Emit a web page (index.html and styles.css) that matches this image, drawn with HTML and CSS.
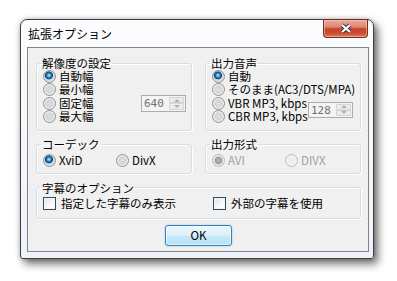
FILE: index.html
```html
<!DOCTYPE html>
<html lang="ja">
<head>
    <meta charset="UTF-8">
    <title>拡張オプション</title>
    <link rel="stylesheet" href="styles.css">
</head>
<body>
    <div class="window">
        <div class="titlebar">
            <span class="title">拡張オプション</span>
            <button class="close" type="button">
                <svg width="14" height="11" viewBox="0 0 14 11">
                    <path d="M3 2 L11 9 M11 2 L3 9" stroke="#3a3a3a" stroke-width="4.2" fill="none"/>
                    <path d="M3 2 L11 9 M11 2 L3 9" stroke="#fff" stroke-width="2.2" fill="none"/>
                </svg>
            </button>
        </div>
        <div class="client">
            <div class="groups">
                <fieldset class="group tall">
                    <legend>解像度の設定</legend>
                    <label class="opt"><input type="radio" name="res" checked> 自動幅</label>
                    <label class="opt"><input type="radio" name="res"> 最小幅</label>
                    <div class="opt">
                        <label class="opt"><input type="radio" name="res"> 固定幅</label>
                        <span class="spin fixed">
                            <span class="val">640</span>
                            <span class="arrows"><span class="up"></span><span class="down"></span></span>
                        </span>
                    </div>
                    <label class="opt"><input type="radio" name="res"> 最大幅</label>
                </fieldset>

                <fieldset class="group tall">
                    <legend>出力音声</legend>
                    <label class="opt"><input type="radio" name="audio" checked> 自動</label>
                    <label class="opt"><input type="radio" name="audio"> そのまま(AC3/DTS/MPA)</label>
                    <div class="pair">
                        <div>
                            <label class="opt"><input type="radio" name="audio"> VBR MP3, kbps</label>
                            <label class="opt"><input type="radio" name="audio"> CBR MP3, kbps</label>
                        </div>
                        <span class="spin">
                            <span class="val">128</span>
                            <span class="arrows"><span class="up"></span><span class="down"></span></span>
                        </span>
                    </div>
                </fieldset>

                <fieldset class="group short">
                    <legend>コーデック</legend>
                    <div class="inline">
                        <label class="opt"><input type="radio" name="codec" checked> XviD</label>
                        <label class="opt"><input type="radio" name="codec"> DivX</label>
                    </div>
                </fieldset>

                <fieldset class="group short" disabled>
                    <legend>出力形式</legend>
                    <div class="inline">
                        <label class="opt off"><input type="radio" name="fmt" checked disabled> AVI</label>
                        <label class="opt off"><input type="radio" name="fmt" disabled> DIVX</label>
                    </div>
                </fieldset>

                <fieldset class="group wide">
                    <legend>字幕のオプション</legend>
                    <div class="checks">
                        <label class="opt"><input type="checkbox"> 指定した字幕のみ表示</label>
                        <label class="opt"><input type="checkbox"> 外部の字幕を使用</label>
                    </div>
                </fieldset>
            </div>
            <div class="actions">
                <button class="ok" type="button">OK</button>
            </div>
        </div>
    </div>
</body>
</html>
```

FILE: styles.css
```css
html, body {
    margin: 0;
    height: 100%;
    overflow: hidden;
}
body {
    background: #fff;
    padding: 19px 0 0 20px;
    box-sizing: border-box;
    font-family: "Noto Sans CJK JP", "Liberation Sans", sans-serif;
    font-size: 11.5px;
    color: #000;
}

/* window frame */
.window {
    width: 354px;
    height: 240px;
    box-sizing: border-box;
    border: 1px solid #3e3e3e;
    border-radius: 7px 7px 3px 3px;
    background: linear-gradient(#fbfcfe, #eef3f9);
    box-shadow: 4px 5px 9px rgba(0, 0, 0, 0.55), 0 0 5px rgba(0, 0, 0, 0.25);
    display: flex;
    flex-direction: column;
}
.titlebar {
    height: 27px;
    display: flex;
    align-items: center;
    padding-left: 7px;
    flex: none;
}
.title {
    font-size: 12px;
    line-height: 14px;
    margin-top: 0;
}
.close {
    margin: -1px 5px 0 auto;
    align-self: flex-start;
    width: 45px;
    height: 19px;
    padding: 0;
    border: 1px solid #7c2d20;
    border-top-color: #6a2a20;
    border-radius: 0 0 4px 4px;
    background: linear-gradient(#e9a99a 0%, #dd8b77 40%, #c9452c 52%, #c94a2f 75%, #dc7a5c 100%);
    box-shadow: inset 0 0 0 1px rgba(255, 220, 210, 0.45);
    display: flex;
    align-items: center;
    justify-content: center;
}
.close svg {
    display: block;
}

/* client area */
.client {
    flex: 1;
    margin: 0 4px 6px 6px;
    border: 1px solid #838383;
    background: #f0f0f0;
    padding: 8px 7px 0 8px;
    display: flex;
    flex-direction: column;
}
.groups {
    display: grid;
    grid-template-columns: 156px 156px;
    column-gap: 13px;
}
.group {
    margin: 0;
    min-width: 0;
    border: 1px solid #d5dfe5;
    border-radius: 3px;
    padding: 0 5px 7px 6px;
    box-shadow: 1px 1px 0 #fff, inset 1px 1px 0 #fff;
}
.group legend {
    padding: 0 1px;
    margin-left: -2px;
    line-height: 14px;
}
.group.short {
    margin-top: 6px;
    padding-top: 3px;
    padding-bottom: 5px;
}
.group.wide {
    grid-column: 1 / 3;
    margin-top: 7px;
    padding-top: 2px;
    padding-bottom: 8px;
}

.opt {
    display: flex;
    align-items: center;
    gap: 3px;
    height: 13.33px;
    line-height: 13px;
    white-space: nowrap;
}
.opt.off {
    color: #a0a0a0;
}
.pair {
    display: flex;
    align-items: center;
}
.pair .spin {
    margin-left: auto;
    margin-right: 2px;
}
.inline {
    display: grid;
    grid-template-columns: 73px 73px;
}
.checks {
    display: grid;
    grid-template-columns: 170px auto;
}
.checks .opt {
    gap: 5px;
}

/* radio and check boxes */
input[type="radio"] {
    appearance: none;
    margin: 0;
    width: 13px;
    height: 13px;
    flex: none;
    border: 1px solid #8e9296;
    border-radius: 50%;
    background: radial-gradient(circle at 50% 50%, #e2e2e2 0, #d4d4d4 3px, #ebebeb 5px, #f8f8f8 100%);
}
input[type="radio"]:checked {
    background: radial-gradient(circle at 45% 40%, #c8f0ff 0, #4fb2e6 1.4px, #1a6cab 2.6px, #0d3f70 3.6px, #cfd6dc 4.3px, #eef0f2 100%);
}
input[type="radio"]:disabled {
    border-color: #b8bcbf;
    background: radial-gradient(circle at 50% 50%, #ededed 0, #f4f4f4 100%);
}
input[type="radio"]:disabled:checked {
    background: radial-gradient(circle at 50% 50%, #b9b9b9 0, #9a9a9a 3.4px, #e4e4e4 4.2px, #f4f4f4 100%);
}
input[type="checkbox"] {
    appearance: none;
    margin: 0;
    width: 13px;
    height: 13px;
    flex: none;
    border: 1px solid #2f4b66;
    background: linear-gradient(135deg, #dce3ea, #fdfdfd 70%);
    box-shadow: inset 0 0 0 1px #f2f5f8;
}

/* spin boxes */
.spin {
    display: flex;
    width: 45px;
    height: 17px;
    box-sizing: border-box;
    border: 1px solid #a9adb0;
    background: #f4f4f4;
    margin: -2px 0 -2px auto;
    font-family: "DejaVu Sans Mono", monospace;
    font-size: 11px;
    color: #707070;
}
.pair .spin {
    height: 16px;
    margin-top: 0;
    margin-bottom: 0;
}
.spin .val {
    flex: 1;
    padding-left: 2px;
    line-height: 15px;
}
.spin .arrows {
    width: 15px;
    display: flex;
    flex-direction: column;
    margin: 1px 1px 1px 0;
}
.spin .arrows span {
    flex: 1;
    border: 1px solid #d6d6d6;
    background: #ececec;
    display: flex;
    align-items: center;
    justify-content: center;
}
.spin .up::after, .spin .down::after {
    content: "";
    border-left: 3px solid transparent;
    border-right: 3px solid transparent;
}
.spin .up::after {
    border-bottom: 3px solid #b0b0b0;
}
.spin .down::after {
    border-top: 3px solid #b0b0b0;
}

/* buttons */
.actions {
    display: flex;
    justify-content: center;
    margin-top: 6px;
}
.ok {
    width: 67px;
    height: 21px;
    padding: 0;
    border: 1px solid #3c7fb1;
    border-radius: 3px;
    background: linear-gradient(#eaf6fd 0%, #dff2fc 48%, #c9e9fa 52%, #b6e0f6 100%);
    box-shadow: inset 0 0 0 1px rgba(255, 255, 255, 0.6), 0 0 2px #7fc4ef;
    font-family: "Noto Sans CJK JP", "Liberation Sans", sans-serif;
    font-size: 11.5px;
    line-height: 17px;
    color: #000;
}
```
